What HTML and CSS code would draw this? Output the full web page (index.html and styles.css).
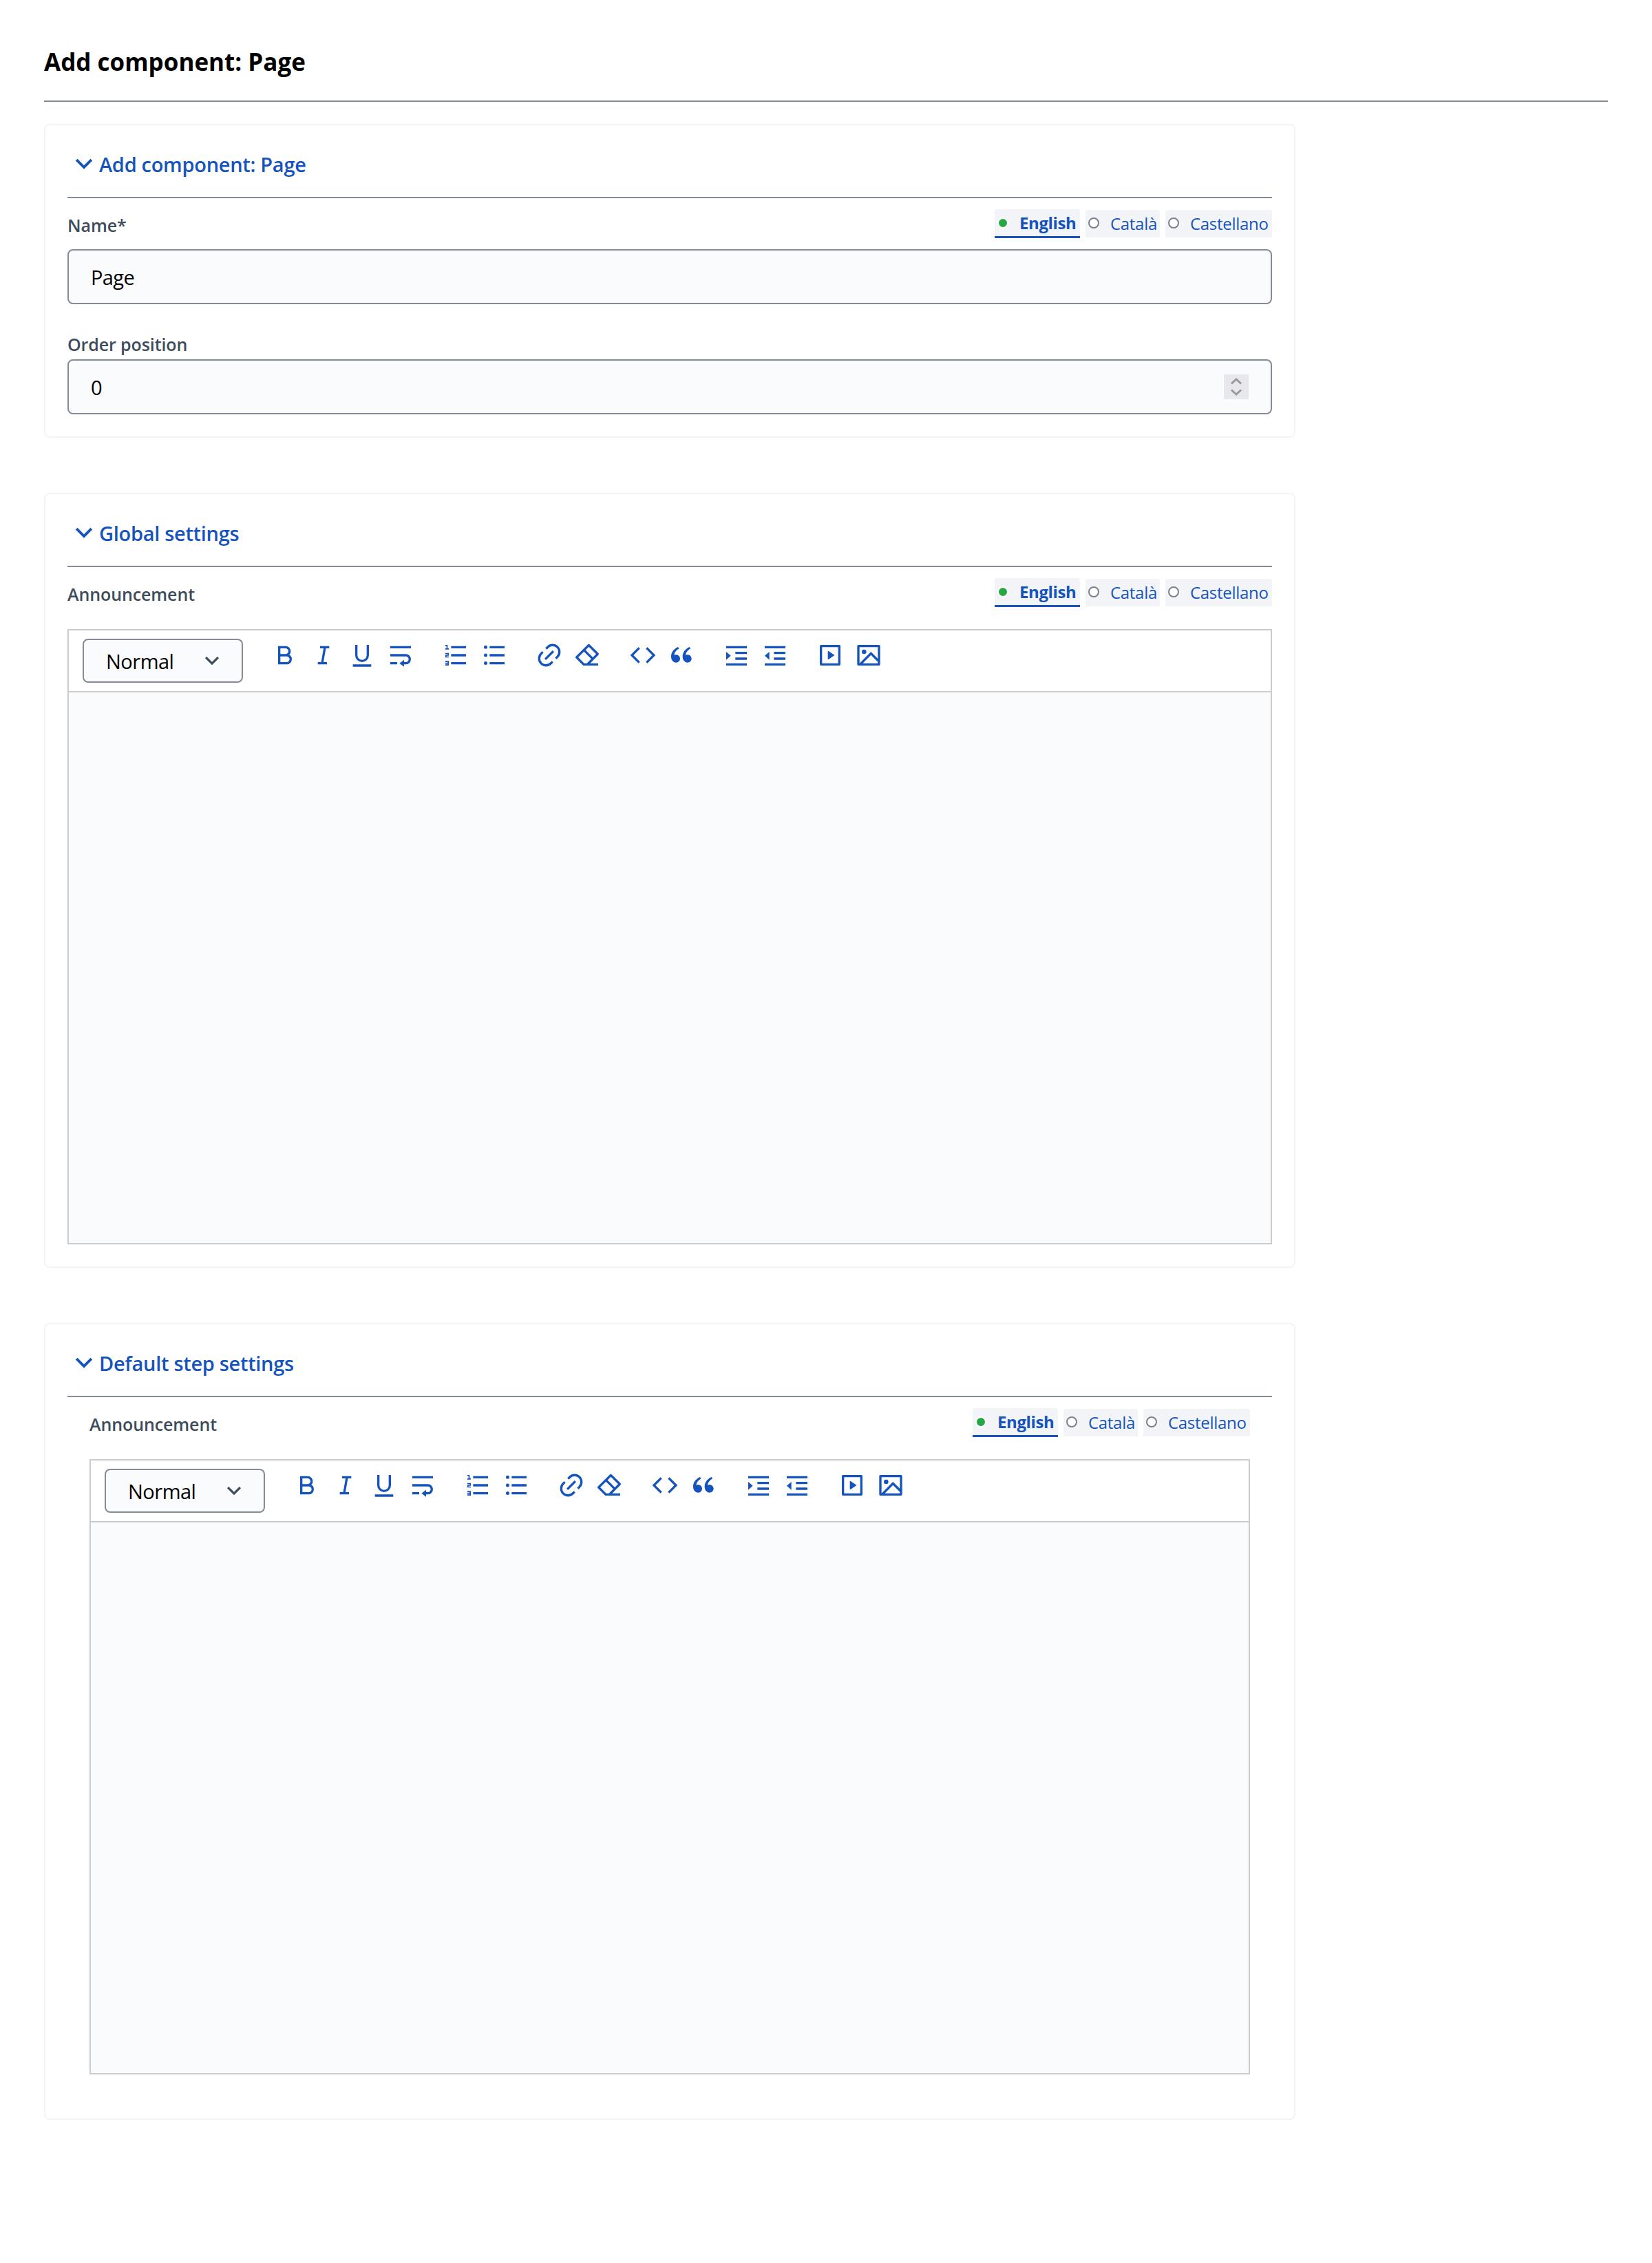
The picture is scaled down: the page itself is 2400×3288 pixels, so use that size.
FILE: index.html
```html
<!DOCTYPE html>
<html lang="en">
<head>
<meta charset="utf-8">
<title>Add component: Page</title>
<link rel="stylesheet" href="styles.css">
</head>
<body>
<svg class="sprite" xmlns="http://www.w3.org/2000/svg">
  <symbol id="i-chev" viewBox="0 0 24 24"><path d="M12 13.172l4.95-4.95 1.414 1.414L12 16 5.636 9.636 7.05 8.222z"/></symbol>
  <symbol id="i-bold" viewBox="0 0 24 24"><path d="M8 11h4.5a2.5 2.5 0 1 0 0-5H8v5zm10 4.5a4.5 4.5 0 0 1-4.5 4.5H6V4h6.5a4.5 4.5 0 0 1 3.256 7.606A4.498 4.498 0 0 1 18 15.5zM8 13v5h5.5a2.5 2.5 0 1 0 0-5H8z"/></symbol>
  <symbol id="i-italic" viewBox="0 0 24 24"><path d="M15 20H7v-2h2.927l2.116-12H9V4h8v2h-2.927l-2.116 12H15z"/></symbol>
  <symbol id="i-under" viewBox="0 0 24 24"><path d="M8 3v9a4 4 0 1 0 8 0V3h2v9a6 6 0 1 1-12 0V3h2zM4 20h16v2H4v-2z"/></symbol>
  <symbol id="i-wrap" viewBox="0 0 24 24"><path d="M15 18h1.5a2.5 2.5 0 1 0 0-5H3v-2h13.5a4.5 4.5 0 1 1 0 9H15v2l-4-3 4-3v2zM3 4h18v2H3V4zm6 14v2H3v-2h6z"/></symbol>
  <symbol id="i-ol" viewBox="0 0 24 24"><path d="M8 4h13v2H8V4zM5 3v3h1v1H3V6h1V4H3V3h2zM3 14v-2.5h2V11H3v-1h3v2.5H4v.5h2v1H3zm2 5.5H3v-1h2V18H3v-1h3v4H3v-1h2v-.5zM8 11h13v2H8v-2zm0 7h13v2H8v-2z"/></symbol>
  <symbol id="i-ul" viewBox="0 0 24 24"><path d="M8 4h13v2H8V4zM4.5 6.5a1.5 1.5 0 1 1 0-3 1.5 1.5 0 0 1 0 3zm0 7a1.5 1.5 0 1 1 0-3 1.5 1.5 0 0 1 0 3zm0 6.9a1.5 1.5 0 1 1 0-3 1.5 1.5 0 0 1 0 3zM8 11h13v2H8v-2zm0 7h13v2H8v-2z"/></symbol>
  <symbol id="i-link" viewBox="0 0 24 24"><path d="M18.364 15.536L16.95 14.12l1.414-1.414a5 5 0 1 0-7.071-7.071L9.879 7.05 8.464 5.636 9.88 4.222a7 7 0 0 1 9.9 9.9l-1.415 1.414zm-2.828 2.828l-1.415 1.414a7 7 0 0 1-9.9-9.9l1.415-1.414L7.05 9.88l-1.414 1.414a5 5 0 1 0 7.071 7.071l1.414-1.414 1.415 1.414zm-.708-10.607l1.415 1.415-7.071 7.07-1.415-1.414 7.071-7.07z"/></symbol>
  <symbol id="i-eraser" viewBox="0 0 24 24"><path d="M8.586 8.858l-4.95 4.95 5.194 5.194H10V19h1.172l3.778-3.778-6.364-6.364zM10 7.444l6.364 6.364 2.828-2.829-6.364-6.364L10 7.444zM14 19h7v2h-9l-3.998.002-6.487-6.487a1 1 0 0 1 0-1.414L12.12 2.494a1 1 0 0 1 1.415 0l7.778 7.778a1 1 0 0 1 0 1.414L14 19z"/></symbol>
  <symbol id="i-code" viewBox="0 0 24 24"><path d="M23 12l-7.071 7.071-1.414-1.414L20.172 12l-5.657-5.657 1.414-1.414L23 12zM3.828 12l5.657 5.657-1.414 1.414L1 12l7.071-7.071 1.414 1.414L3.828 12z"/></symbol>
  <symbol id="i-quote" viewBox="0 0 24 24"><path d="M4.583 17.321C3.553 16.227 3 15 3 13.011c0-3.5 2.457-6.637 6.03-8.188l.893 1.378c-3.335 1.804-3.987 4.145-4.247 5.621.537-.278 1.24-.375 1.929-.311 1.804.167 3.226 1.648 3.226 3.489a3.5 3.5 0 0 1-3.5 3.5c-1.073 0-2.099-.49-2.748-1.179zm10 0C13.553 16.227 13 15 13 13.011c0-3.5 2.457-6.637 6.03-8.188l.893 1.378c-3.335 1.804-3.987 4.145-4.247 5.621.537-.278 1.24-.375 1.929-.311 1.804.167 3.226 1.648 3.226 3.489a3.5 3.5 0 0 1-3.5 3.5c-1.073 0-2.099-.49-2.748-1.179z"/></symbol>
  <symbol id="i-indent" viewBox="0 0 24 24"><path d="M3 4h18v2H3V4zm0 15h18v2H3v-2zm8-5h10v2H11v-2zm0-5h10v2H11V9zm-4 3.5L3 16V9l4 3.5z"/></symbol>
  <symbol id="i-outdent" viewBox="0 0 24 24"><path d="M3 4h18v2H3V4zm0 15h18v2H3v-2zm8-5h10v2H11v-2zm0-5h10v2H11V9zm-8 3.5L7 9v7l-4-3.5z"/></symbol>
  <symbol id="i-video" viewBox="0 0 24 24"><path d="M3 3.993C3 3.445 3.445 3 3.993 3h16.014c.548 0 .993.445.993.993v16.014a.994.994 0 0 1-.993.993H3.993A.994.994 0 0 1 3 20.007V3.993zM5 5v14h14V5H5zm5.622 3.415l4.879 3.252a.4.4 0 0 1 0 .666l-4.88 3.252a.4.4 0 0 1-.621-.332V8.747a.4.4 0 0 1 .622-.332z"/></symbol>
  <symbol id="i-image" viewBox="0 0 24 24"><path d="M4.828 21l-.02.02-.021-.02H2.992A.993.993 0 0 1 2 20.007V3.993A1 1 0 0 1 2.992 3h18.016c.548 0 .992.445.992.993v16.014a1 1 0 0 1-.992.993H4.828zM20 15V5H4v14L14 9l6 6zm0 2.828l-6-6L6.828 19H20v-1.172zM8 11a2 2 0 1 1 0-4 2 2 0 0 1 0 4z"/></symbol>
</svg>

<header class="page-head"><h1>Add component: Page</h1></header>

<section class="card">
  <h2 class="card-title"><svg class="chev"><use href="#i-chev"/></svg>Add component: Page</h2>
  <div class="label-row">
    <label class="label">Name*</label>
    <div class="tabs">
      <a class="tab tab-en active"><i class="dot"></i>English</a>
      <a class="tab tab-ca"><i class="ring"></i>Català</a>
      <a class="tab tab-es"><i class="ring"></i>Castellano</a>
    </div>
  </div>
  <div class="box"><input class="box-input" value="Page"></div>
  <label class="label label-plain">Order position</label>
  <div class="box">
    <input class="box-input" value="0">
    <span class="spin"><svg viewBox="0 0 36 36"><path d="M11 13.5 18 7l7 6.500M11 22.500 18 29l7-6.500"/></svg></span>
  </div>
</section>

<section class="card">
  <h2 class="card-title"><svg class="chev"><use href="#i-chev"/></svg>Global settings</h2>
  <div class="label-row">
    <label class="label">Announcement</label>
    <div class="tabs">
      <a class="tab tab-en active"><i class="dot"></i>English</a>
      <a class="tab tab-ca"><i class="ring"></i>Català</a>
      <a class="tab tab-es"><i class="ring"></i>Castellano</a>
    </div>
  </div>
  <div class="editor">
    <div class="toolbar">
      <div class="select">Normal<svg class="select-chev"><use href="#i-chev"/></svg></div>
      <div class="group">
        <button class="tool"><svg><use href="#i-bold"/></svg></button>
        <button class="tool"><svg><use href="#i-italic"/></svg></button>
        <button class="tool"><svg><use href="#i-under"/></svg></button>
        <button class="tool"><svg><use href="#i-wrap"/></svg></button>
      </div>
      <div class="group">
        <button class="tool"><svg><use href="#i-ol"/></svg></button>
        <button class="tool"><svg><use href="#i-ul"/></svg></button>
      </div>
      <div class="group">
        <button class="tool"><svg><use href="#i-link"/></svg></button>
        <button class="tool"><svg><use href="#i-eraser"/></svg></button>
      </div>
      <div class="group">
        <button class="tool"><svg><use href="#i-code"/></svg></button>
        <button class="tool"><svg><use href="#i-quote"/></svg></button>
      </div>
      <div class="group">
        <button class="tool"><svg><use href="#i-indent"/></svg></button>
        <button class="tool"><svg><use href="#i-outdent"/></svg></button>
      </div>
      <div class="group">
        <button class="tool"><svg><use href="#i-video"/></svg></button>
        <button class="tool"><svg><use href="#i-image"/></svg></button>
      </div>
    </div>
    <div class="editor-body"></div>
  </div>
</section>

<section class="card">
  <h2 class="card-title"><svg class="chev"><use href="#i-chev"/></svg>Default step settings</h2>
  <div class="nested">
    <div class="label-row">
      <label class="label">Announcement</label>
      <div class="tabs">
        <a class="tab tab-en active"><i class="dot"></i>English</a>
        <a class="tab tab-ca"><i class="ring"></i>Català</a>
        <a class="tab tab-es"><i class="ring"></i>Castellano</a>
      </div>
    </div>
    <div class="editor">
      <div class="toolbar">
        <div class="select">Normal<svg class="select-chev"><use href="#i-chev"/></svg></div>
        <div class="group">
          <button class="tool"><svg><use href="#i-bold"/></svg></button>
          <button class="tool"><svg><use href="#i-italic"/></svg></button>
          <button class="tool"><svg><use href="#i-under"/></svg></button>
          <button class="tool"><svg><use href="#i-wrap"/></svg></button>
        </div>
        <div class="group">
          <button class="tool"><svg><use href="#i-ol"/></svg></button>
          <button class="tool"><svg><use href="#i-ul"/></svg></button>
        </div>
        <div class="group">
          <button class="tool"><svg><use href="#i-link"/></svg></button>
          <button class="tool"><svg><use href="#i-eraser"/></svg></button>
        </div>
        <div class="group">
          <button class="tool"><svg><use href="#i-code"/></svg></button>
          <button class="tool"><svg><use href="#i-quote"/></svg></button>
        </div>
        <div class="group">
          <button class="tool"><svg><use href="#i-indent"/></svg></button>
          <button class="tool"><svg><use href="#i-outdent"/></svg></button>
        </div>
        <div class="group">
          <button class="tool"><svg><use href="#i-video"/></svg></button>
          <button class="tool"><svg><use href="#i-image"/></svg></button>
        </div>
      </div>
      <div class="editor-body"></div>
    </div>
  </div>
</section>
</body>
</html>
```
FILE: styles.css
```css
* { box-sizing: border-box; }
html, body { margin: 0; padding: 0; background: #fff; }
body {
  padding: 0 64px;
  font-family: "Open Sans", "Liberation Sans", sans-serif;
  color: #000;
}
.sprite { display: none; }

.page-head {
  height: 148px;
  border-bottom: 2px solid #868b98;
  margin-bottom: 32px;
  padding-top: 68px;
}
.page-head h1 {
  margin: 0;
  font-size: 35px;
  line-height: 44px;
  font-weight: 700;
  letter-spacing: 0;
}

.card {
  width: 1818px;
  border: 2px solid #f3f4f8;
  border-radius: 8px;
  padding: 0 32px 32px;
  margin-bottom: 80px;
  background: #fff;
}
.card-title {
  display: flex;
  align-items: center;
  height: 106px;
  margin: 0;
  padding-top: 8px;
  border-bottom: 2px solid #868b98;
  font-size: 29px;
  font-weight: 600;
  letter-spacing: -0.3px;
  color: #1554bc;
}
.chev {
  width: 46px;
  height: 46px;
  margin-left: 1px;
  margin-right: -1px;
  fill: #1554bc;
}

.label-row {
  display: flex;
  justify-content: space-between;
  align-items: center;
  margin: 16px 0;
  height: 42px;
}
.label {
  position: relative;
  top: 2px;
  font-size: 25px;
  line-height: 32px;
  font-weight: 600;
  letter-spacing: -0.1px;
  color: #3e4c5c;
}
.label-plain {
  display: block;
  top: 0;
  margin: 42px 0 6px;
}

.tabs { display: flex; gap: 8px; align-items: flex-start; height: 42px; }
.tab {
  display: flex;
  align-items: center;
  height: 40px;
  margin-top: 1px;
  padding-bottom: 2px;
  background: #f3f4f8;
  border-radius: 4px 4px 0 0;
  font-size: 24px;
  letter-spacing: -0.3px;
  color: #1554bc;
  white-space: nowrap;
}
.tab-en { width: 124px; }
.tab-ca { width: 108px; }
.tab-es { width: 155px; }
.tab.active {
  height: 42px;
  margin-top: 0;
  padding-bottom: 0;
  font-weight: 700;
  letter-spacing: -0.4px;
  border-bottom: 3px solid #1554bc;
}
.dot {
  flex: none;
  width: 16px;
  height: 16px;
  margin: 0 16px 0 4px;
  border-radius: 50%;
  background: #27a744;
  border: 2px solid #fff;
}
.ring {
  flex: none;
  width: 16px;
  height: 16px;
  margin: 0 16px 0 4px;
  border-radius: 50%;
  background: #fff;
  border: 2px solid #7a8290;
}

.box {
  display: flex;
  align-items: center;
  height: 80px;
  padding: 0 32px;
  background: #fafbfd;
  border: 2px solid #868b98;
  border-radius: 8px;
}
.box-input {
  flex: 1;
  min-width: 0;
  padding: 0;
  border: 0;
  outline: 0;
  background: transparent;
  font-family: inherit;
  font-size: 29px;
  letter-spacing: -0.6px;
  color: #000;
}
.spin { flex: none; width: 36px; height: 36px; background: #e8e8ec; }
.spin svg { display: block; width: 36px; height: 36px; fill: none; stroke: #9a96a4; stroke-width: 3; }

.editor { margin-top: 32px; }
.toolbar {
  display: flex;
  align-items: flex-start;
  height: 92px;
  padding: 12px 20px 0;
  background: #fff;
  border: 2px solid #ccc;
}
.select {
  display: flex;
  align-items: center;
  justify-content: space-between;
  flex: none;
  width: 233px;
  height: 64px;
  margin-right: 33px;
  padding: 0 24px 0 32px;
  background: #fafbfd;
  border: 2px solid #868b98;
  border-radius: 8px;
  font-size: 29px;
  letter-spacing: -0.5px;
}
.select-chev { width: 38px; height: 38px; fill: #3e4c5c; }
.group { display: flex; margin-right: 24px; }
.tool {
  display: flex;
  align-items: center;
  justify-content: center;
  width: 56px;
  height: 48px;
  padding: 0;
  border: 0;
  background: none;
}
.tool svg { width: 40px; height: 40px; fill: #1554bc; }
.editor-body {
  height: 802px;
  background: #fafbfd;
  border: 2px solid #ccc;
  border-top: 0;
}
.nested { padding: 0 32px 32px; }
```
